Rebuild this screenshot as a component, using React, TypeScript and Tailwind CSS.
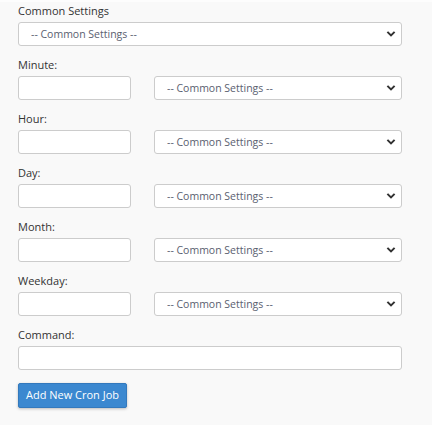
import React from "react";

const rows = ["Minute:", "Hour:", "Day:", "Month:", "Weekday:"];

function Chevron() {
  return (
    <svg
      className="pointer-events-none absolute right-[6px] top-1/2 -translate-y-1/2"
      width="10"
      height="7"
      viewBox="0 0 10 7"
    >
      <path d="M1.4 1.4 L5 4.9 L8.6 1.4" fill="none" stroke="#333" strokeWidth="2" />
    </svg>
  );
}

function SettingsSelect({ className }: { className: string }) {
  return (
    <div className={`relative ${className}`}>
      <select className="h-[24px] w-full appearance-none rounded-[3px] border border-[#cccccc] bg-white pl-[12px] pr-6 text-[10.5px] leading-[22px] text-[#5a6070] outline-none">
        <option>-- Common Settings --</option>
      </select>
      <Chevron />
    </div>
  );
}

export default function App() {
  return (
    <div className="min-h-[425px] w-[432px] border-t-2 border-[#fdfdfd] bg-[#f9f9f9] pl-[18px] font-['Open_Sans',sans-serif] text-[11px] text-[#333333]">
      <div className="w-[384px]">
        <div className="mb-[10px]">
          <label className="mb-[2px] block leading-[18px]">Common Settings</label>
          <SettingsSelect className="w-[384px]" />
        </div>

        {rows.map((r) => (
          <div key={r} className="mb-[10px]">
            <label className="mb-[2px] block leading-[18px]">{r}</label>
            <div className="flex gap-[23px]">
              <input
                type="text"
                className="h-[24px] w-[113px] rounded-[3px] border border-[#cccccc] bg-white px-2 outline-none"
              />
              <SettingsSelect className="w-[248px]" />
            </div>
          </div>
        ))}

        <div>
          <label className="mb-[2px] block leading-[18px]">Command:</label>
          <input
            type="text"
            className="h-[24px] w-[384px] rounded-[3px] border border-[#cccccc] bg-white px-2 outline-none"
          />
        </div>

        <button
          type="button"
          className="mt-[13px] h-[25px] w-[109px] rounded-[2px] border border-[#3379bd] bg-[#3b88d0] text-[11px] text-white shadow-[0_1px_3px_rgba(0,0,0,0.25)]"
        >
          Add New Cron Job
        </button>
      </div>
    </div>
  );
}
